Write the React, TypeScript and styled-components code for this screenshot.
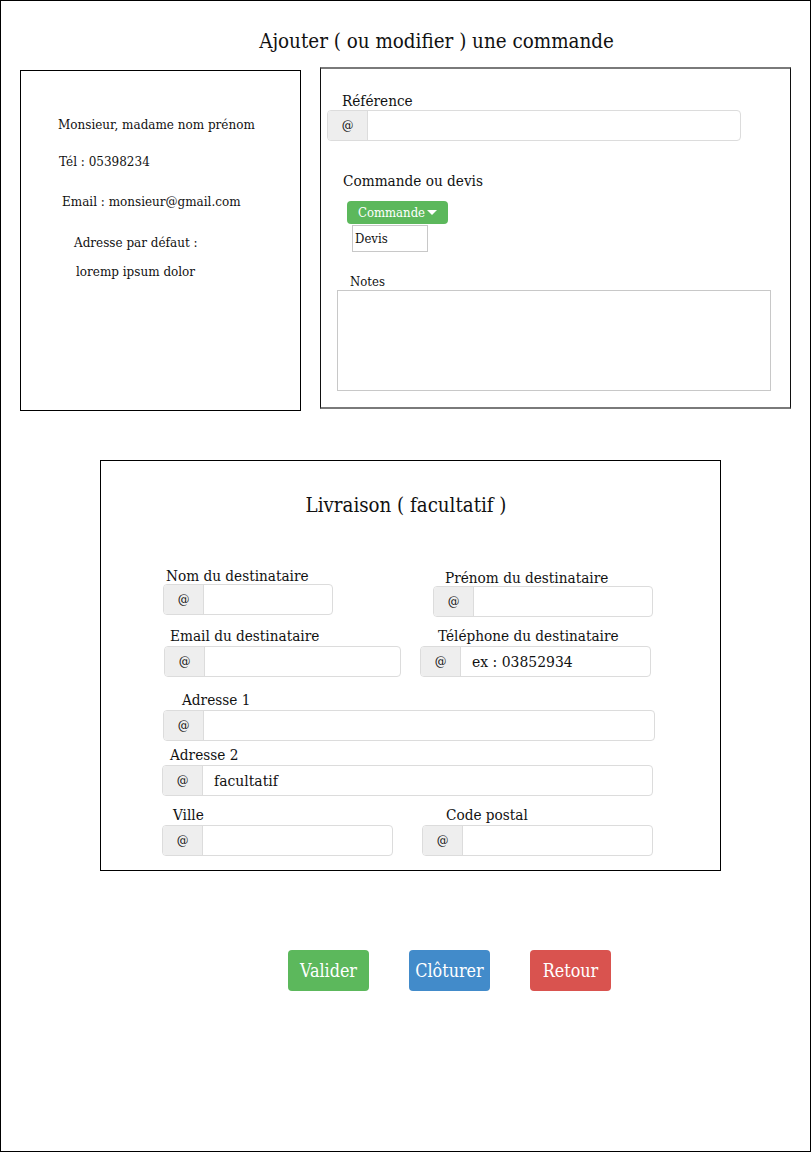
import React from "react";
import styled, { createGlobalStyle } from "styled-components";

const Global = createGlobalStyle`
  html, body { margin: 0; padding: 0; background: #fff; }
  body { font-family: "DejaVu Serif", serif; color: #111; }
  * { box-sizing: border-box; }
`;

const Page = styled.div`
  width: 811px;
  height: 1152px;
  border: 1px solid #000;
  display: flex;
  flex-direction: column;
`;

const Title = styled.h1`
  margin: 29px 0 0;
  padding-left: 62px;
  font-size: 20.4px;
  line-height: 22px;
  font-weight: normal;
  font-stretch: condensed;
  text-align: center;
`;

const TopRow = styled.div`
  display: flex;
  align-items: flex-start;
  margin: 15px 0 0 19px;
`;

const ClientCard = styled.div`
  width: 281px;
  height: 341px;
  border: 1px solid #000;
  margin-top: 3px;
  padding-top: 46px;
  display: flex;
  flex-direction: column;
`;

const ClientLine = styled.div<{ $x: number; $mt: number }>`
  margin-left: ${(p) => p.$x}px;
  margin-top: ${(p) => p.$mt}px;
  font-size: 12px;
  line-height: 16px;
`;

const OrderCard = styled.div`
  width: 471px;
  height: 342px;
  margin-left: 19px;
  border-left: 1px solid #111;
  border-right: 1px solid #111;
  border-top: 2px solid #7a7a7a;
  border-bottom: 2px solid #7a7a7a;
  display: flex;
  flex-direction: column;
  align-items: flex-start;
  padding-top: 23px;
`;

const Label = styled.div<{ $x: number; $mt?: number; $h?: number; $size?: number }>`
  margin-left: ${(p) => p.$x}px;
  margin-top: ${(p) => p.$mt ?? 0}px;
  height: ${(p) => p.$h ?? 18}px;
  font-size: ${(p) => p.$size ?? 15.2}px;
  line-height: 18px;
  font-stretch: condensed;
  white-space: nowrap;
`;

const Group = styled.div<{ $w: number; $x?: number }>`
  display: flex;
  width: ${(p) => p.$w}px;
  height: 31px;
  margin-left: ${(p) => p.$x ?? 0}px;
  border: 1px solid #dcdcdc;
  border-radius: 4px;
  overflow: hidden;
  background: #fff;
`;

const Addon = styled.span`
  width: 40px;
  flex: none;
  display: flex;
  align-items: center;
  justify-content: center;
  background: #eee;
  border-right: 1px solid #dcdcdc;
  font-size: 13px;
  font-stretch: condensed;
`;

const Value = styled.span`
  display: flex;
  align-items: center;
  padding-left: 11px;
  font-size: 15.5px;
  font-stretch: condensed;
`;

const DropButton = styled.div`
  margin: 11px 0 0 26px;
  width: 101px;
  height: 23px;
  border-radius: 4px;
  background: #5cb85c;
  color: #fff;
  font-size: 13px;
  font-stretch: condensed;
  display: flex;
  align-items: center;
  justify-content: center;
  gap: 2px;
`;

const Caret = styled.span`
  width: 0;
  height: 0;
  border-left: 5px solid transparent;
  border-right: 5px solid transparent;
  border-top: 5px solid #fff;
`;

const MenuItem = styled.div`
  margin: 1px 0 0 31px;
  width: 76px;
  height: 27px;
  border: 1px solid #c8c8c8;
  font-size: 13px;
  line-height: 25px;
  padding-left: 2px;
  font-stretch: condensed;
`;

const Notes = styled.div`
  margin: 1px 0 0 16px;
  width: 434px;
  height: 101px;
  border: 1px solid #c8c8c8;
`;

const DeliveryCard = styled.div`
  width: 621px;
  height: 411px;
  margin: 49px 0 0 99px;
  border: 1px solid #000;
  padding-top: 33px;
  display: flex;
  flex-direction: column;
`;

const SubTitle = styled.h2`
  margin: 0;
  padding-right: 9px;
  font-size: 20.3px;
  line-height: 22px;
  font-weight: normal;
  font-stretch: condensed;
  text-align: center;
`;

const Row = styled.div<{ $mt: number }>`
  display: flex;
  align-items: flex-start;
  margin-top: ${(p) => p.$mt}px;
`;

const Field = styled.div<{ $x: number; $mt?: number }>`
  display: flex;
  flex-direction: column;
  margin-left: ${(p) => p.$x}px;
  margin-top: ${(p) => p.$mt ?? 0}px;
`;

const Actions = styled.div`
  display: flex;
  margin: 79px 0 0 287px;
  gap: 40px;
`;

const Action = styled.button<{ $bg: string }>`
  width: 81px;
  height: 41px;
  border: none;
  border-radius: 4px;
  background: ${(p) => p.$bg};
  color: #fff;
  font-family: "DejaVu Serif", serif;
  font-size: 17.8px;
  font-stretch: condensed;
  padding: 0;
`;

type FieldProps = { x: number; lx: number; w: number; label: string; lh: number; mt?: number; value?: string };

const InputField = ({ x, lx, w, label, lh, mt, value }: FieldProps) => (
  <Field $x={x} $mt={mt}>
    <Label $x={lx} $h={lh}>{label}</Label>
    <Group $w={w}>
      <Addon>@</Addon>
      {value && <Value>{value}</Value>}
    </Group>
  </Field>
);

export default function App() {
  return (
    <>
      <Global />
      <Page>
        <Title>Ajouter ( ou modifier ) une commande</Title>
        <TopRow>
          <ClientCard>
            <ClientLine $x={37} $mt={0}>Monsieur, madame nom prénom</ClientLine>
            <ClientLine $x={38} $mt={21}>Tél : 05398234</ClientLine>
            <ClientLine $x={41} $mt={24}>Email : monsieur@gmail.com</ClientLine>
            <ClientLine $x={53} $mt={25}>Adresse par défaut :</ClientLine>
            <ClientLine $x={55} $mt={13}>loremp ipsum dolor</ClientLine>
          </ClientCard>
          <OrderCard>
            <Label $x={21} $h={18}>Référence</Label>
            <Group $w={414} $x={6}>
              <Addon>@</Addon>
            </Group>
            <Label $x={22} $mt={31}>Commande ou devis</Label>
            <DropButton>
              Commande<Caret />
            </DropButton>
            <MenuItem>Devis</MenuItem>
            <Label $x={29} $mt={21} $h={16} $size={13}>Notes</Label>
            <Notes />
          </OrderCard>
        </TopRow>
        <DeliveryCard>
          <SubTitle>Livraison ( facultatif )</SubTitle>
          <Row $mt={51}>
            <InputField x={62} lx={3} w={170} lh={17} label="Nom du destinataire" />
            <InputField x={100} lx={12} w={220} lh={17} mt={2} label="Prénom du destinataire" />
          </Row>
          <Row $mt={10}>
            <InputField x={63} lx={6} w={237} lh={19} label="Email du destinataire" />
            <InputField x={19} lx={18} w={231} lh={19} label="Téléphone du destinataire" value="ex : 03852934" />
          </Row>
          <Row $mt={14}>
            <InputField x={62} lx={19} w={492} lh={19} label="Adresse 1" />
          </Row>
          <Row $mt={5}>
            <InputField x={61} lx={8} w={491} lh={19} label="Adresse 2" value="facultatif" />
          </Row>
          <Row $mt={10}>
            <InputField x={61} lx={11} w={231} lh={19} label="Ville" />
            <InputField x={29} lx={24} w={231} lh={19} label="Code postal" />
          </Row>
        </DeliveryCard>
        <Actions>
          <Action $bg="#5cb85c">Valider</Action>
          <Action $bg="#428bca">Clôturer</Action>
          <Action $bg="#d9534f">Retour</Action>
        </Actions>
      </Page>
    </>
  );
}
